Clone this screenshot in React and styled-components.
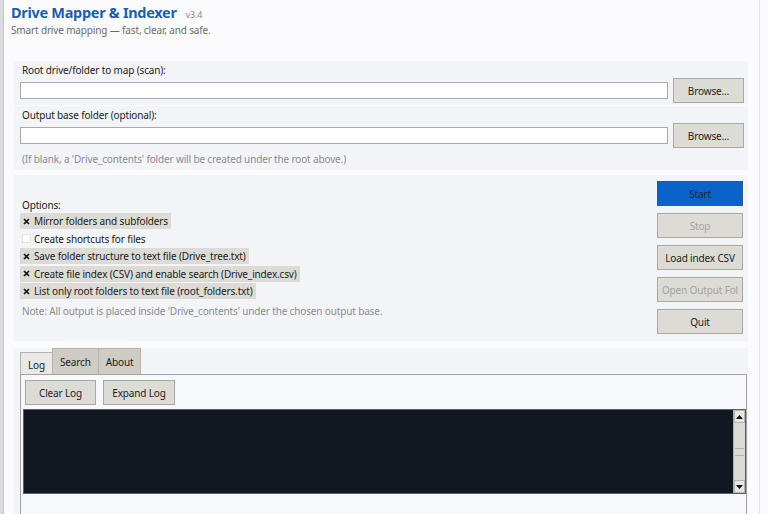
import React from "react";
import styled, { createGlobalStyle } from "styled-components";

const Global = createGlobalStyle`
  html, body { margin: 0; padding: 0; background: #fbfbfd; }
  body { font-family: "Noto Sans", "Open Sans", sans-serif; font-size: 10px; letter-spacing: -0.15px; color: #1b1b1b; }
  #root { height: 514px; overflow: hidden; }
`;

const Window = styled.div`
  display: flex;
  height: 514px;
  width: 768px;
  overflow: hidden;
`;

const LeftEdge = styled.div`
  width: 3px;
  flex: none;
  background: #d9d9de;
  border-right: 1px solid #c4c4ca;
`;

const Main = styled.div`
  width: 744px;
  flex: none;
  padding: 0 0 0 7px;
  box-sizing: border-box;
  display: flex;
  flex-direction: column;
`;

const RightEdge = styled.div`
  flex: 1;
  border-left: 1px solid #e4e5ea;
  margin-left: 11px;
`;

const Header = styled.div`
  padding: 2px 0 0 0;
  height: 61px;
  box-sizing: border-box;
`;

const TitleRow = styled.div`
  display: flex;
  align-items: baseline;
  gap: 9px;
`;

const Title = styled.h1`
  margin: 0;
  font-size: 14.5px;
  font-weight: 700;
  color: #1d5ea8;
  letter-spacing: -0.3px;
`;

const Version = styled.span`
  font-size: 9px;
  color: #8a8a8a;
`;

const Subtitle = styled.div`
  margin-top: 1px;
  color: #6a6a6a;
  font-size: 10px;
`;

const Panel = styled.section`
  margin-left: 3px;
  background: #f3f4f8;
  padding: ${(p) => p.$pad || "3px 4px 3px 6px"};
  margin-bottom: ${(p) => p.$mb || "0"};
  box-sizing: border-box;
  height: ${(p) => p.$h || "auto"};
  display: flex;
  flex-direction: column;
`;

const Label = styled.div`
  padding-left: 2px;
  height: 13px;
  line-height: 13px;
  color: ${(p) => (p.$muted ? "#8c8c8c" : "#1b1b1b")};
`;

const FieldRow = styled.div`
  display: flex;
  align-items: center;
  gap: 5px;
  margin-top: 1px;
`;

const Input = styled.div`
  flex: 1;
  height: 15px;
  background: #fff;
  border: 1px solid #a9a9a9;
`;

const Button = styled.button`
  width: ${(p) => p.$w || "71px"};
  height: 25px;
  flex: none;
  margin: 0;
  padding: 0;
  font-family: inherit;
  font-size: 10px;
  letter-spacing: -0.15px;
  background: ${(p) => (p.$primary ? "#0b63c9" : "#dddbd6")};
  border: 1px solid ${(p) => (p.$primary ? "#2a5a96" : "#aaa8a2")};
  color: ${(p) => (p.$disabled ? "#a3a3a3" : p.$primary ? "#12264a" : "#1b1b1b")};
  white-space: nowrap;
  overflow: hidden;
`;

const OptionsBody = styled.div`
  display: flex;
  justify-content: space-between;
`;

const OptionsLeft = styled.div`
  display: flex;
  flex-direction: column;
  padding-top: 24px;
`;

const CheckRow = styled.div`
  display: flex;
  align-items: center;
  align-self: flex-start;
  gap: 3px;
  height: 16px;
  margin-bottom: 1.5px;
  padding: 0 3px 0 2px;
  background: ${(p) => (p.$on ? "#dddbd6" : "transparent")};
`;

const Box = styled.span`
  width: 9px;
  height: 9px;
  box-sizing: border-box;
  display: inline-flex;
  align-items: center;
  justify-content: center;
  background: ${(p) => (p.$on ? "transparent" : "#fff")};
  border: 1px solid ${(p) => (p.$on ? "transparent" : "#e2e2e2")};
`;

const Note = styled.div`
  color: #8c8c8c;
  padding-left: 2px;
  margin-top: 3px;
`;

const ActionCol = styled.div`
  display: flex;
  flex-direction: column;
  gap: 7px;
  padding: 6px 1px 0 0;
`;

const TabsPanel = styled.section`
  margin-left: 3px;
  background: #f3f4f8;
  padding: 0 1px 0 6px;
  flex: 1;
  display: flex;
  flex-direction: column;
`;

const TabBar = styled.div`
  display: flex;
  align-items: flex-end;
  height: 26px;
`;

const Tab = styled.div`
  height: ${(p) => (p.$active ? "22px" : "26px")};
  padding: 0 7px;
  box-sizing: border-box;
  display: flex;
  align-items: ${(p) => (p.$active ? "flex-end" : "center")};
  padding-bottom: ${(p) => (p.$active ? "2px" : "0")};
  background: ${(p) => (p.$active ? "#e9e8e4" : "#cfccc5")};
  border: 1px solid #b6b3ac;
  border-bottom: none;
  margin-right: -1px;
  font-size: 10px;
`;

const TabBody = styled.div`
  flex: 1;
  border: 1px solid #a3a3a3;
  border-bottom: none;
  background: #f7f8fb;
  padding: 5px 0 0 2px;
  display: flex;
  flex-direction: column;
`;

const LogTools = styled.div`
  display: flex;
  gap: 7px;
  padding-left: 2px;
`;

const LogArea = styled.div`
  margin-top: 4px;
  height: 83px;
  display: flex;
  background: #111822;
  border: 1px solid #5c6066;
`;

const LogText = styled.div`
  flex: 1;
`;

const Scroll = styled.div`
  width: 11px;
  background: #dcdad5;
  border-left: 1px solid #b5b3ad;
  display: flex;
  flex-direction: column;
  justify-content: space-between;
  align-items: stretch;
`;

const Arrow = styled.div`
  height: 11px;
  display: flex;
  align-items: center;
  justify-content: center;
  background: #e8e6e2;
  border: 1px solid #b5b3ad;
`;

const Grip = styled.div`
  height: 6px;
  border-top: 1px solid #b5b3ad;
  border-bottom: 1px solid #b5b3ad;
  margin: 0 1px;
`;

const Tri = ({ up }) => (
  <svg width="7" height="4" viewBox="0 0 7 4">
    <polygon points={up ? "0,4 7,4 3.5,0" : "0,0 7,0 3.5,4"} fill="#111" />
  </svg>
);

const Cross = () => (
  <svg width="7" height="7" viewBox="0 0 7 7">
    <path d="M1 1 L6 6 M6 1 L1 6" stroke="#111" strokeWidth="1.7" strokeLinecap="butt" />
  </svg>
);

const options = [
  ["Mirror folders and subfolders", true],
  ["Create shortcuts for files", false],
  ["Save folder structure to text file (Drive_tree.txt)", true],
  ["Create file index (CSV) and enable search (Drive_index.csv)", true],
  ["List only root folders to text file (root_folders.txt)", true],
];

export default function App() {
  return (
    <>
      <Global />
      <Window>
        <LeftEdge />
        <Main>
          <Header>
            <TitleRow>
              <Title>Drive Mapper &amp; Indexer</Title>
              <Version>v3.4</Version>
            </TitleRow>
            <Subtitle>Smart drive mapping — fast, clear, and safe.</Subtitle>
          </Header>

          <Panel $h="44px" $mb="1px">
            <Label>Root drive/folder to map (scan):</Label>
            <FieldRow>
              <Input />
              <Button>Browse...</Button>
            </FieldRow>
          </Panel>

          <Panel $h="64px" $mb="5px" $pad="3px 4px 0 6px">
            <Label>Output base folder (optional):</Label>
            <FieldRow>
              <Input />
              <Button>Browse...</Button>
            </FieldRow>
            <Label $muted style={{ marginTop: "5px" }}>
              (If blank, a 'Drive_contents' folder will be created under the root above.)
            </Label>
          </Panel>

          <Panel $h="166px" $mb="7px" $pad="0 4px 0 6px">
            <OptionsBody>
              <OptionsLeft>
                <Label style={{ marginBottom: "1px" }}>Options:</Label>
                {options.map(([t, on]) => (
                  <CheckRow key={t} $on={on}>
                    <Box $on={on}>{on ? <Cross /> : null}</Box>
                    <span>{t}</span>
                  </CheckRow>
                ))}
                <Note>Note: All output is placed inside 'Drive_contents' under the chosen output base.</Note>
              </OptionsLeft>
              <ActionCol>
                <Button $w="86px" $primary>Start</Button>
                <Button $w="86px" $disabled>Stop</Button>
                <Button $w="86px">Load index CSV</Button>
                <Button $w="86px" $disabled>Open Output Fol</Button>
                <Button $w="86px">Quit</Button>
              </ActionCol>
            </OptionsBody>
          </Panel>

          <TabsPanel>
            <TabBar>
              <Tab $active>Log</Tab>
              <Tab>Search</Tab>
              <Tab>About</Tab>
            </TabBar>
            <TabBody>
              <LogTools>
                <Button $w="71px">Clear Log</Button>
                <Button $w="72px">Expand Log</Button>
              </LogTools>
              <LogArea>
                <LogText />
                <Scroll>
                  <Arrow><Tri up /></Arrow>
                  <Grip />
                  <Arrow><Tri /></Arrow>
                </Scroll>
              </LogArea>
            </TabBody>
          </TabsPanel>
        </Main>
        <RightEdge />
      </Window>
    </>
  );
}
